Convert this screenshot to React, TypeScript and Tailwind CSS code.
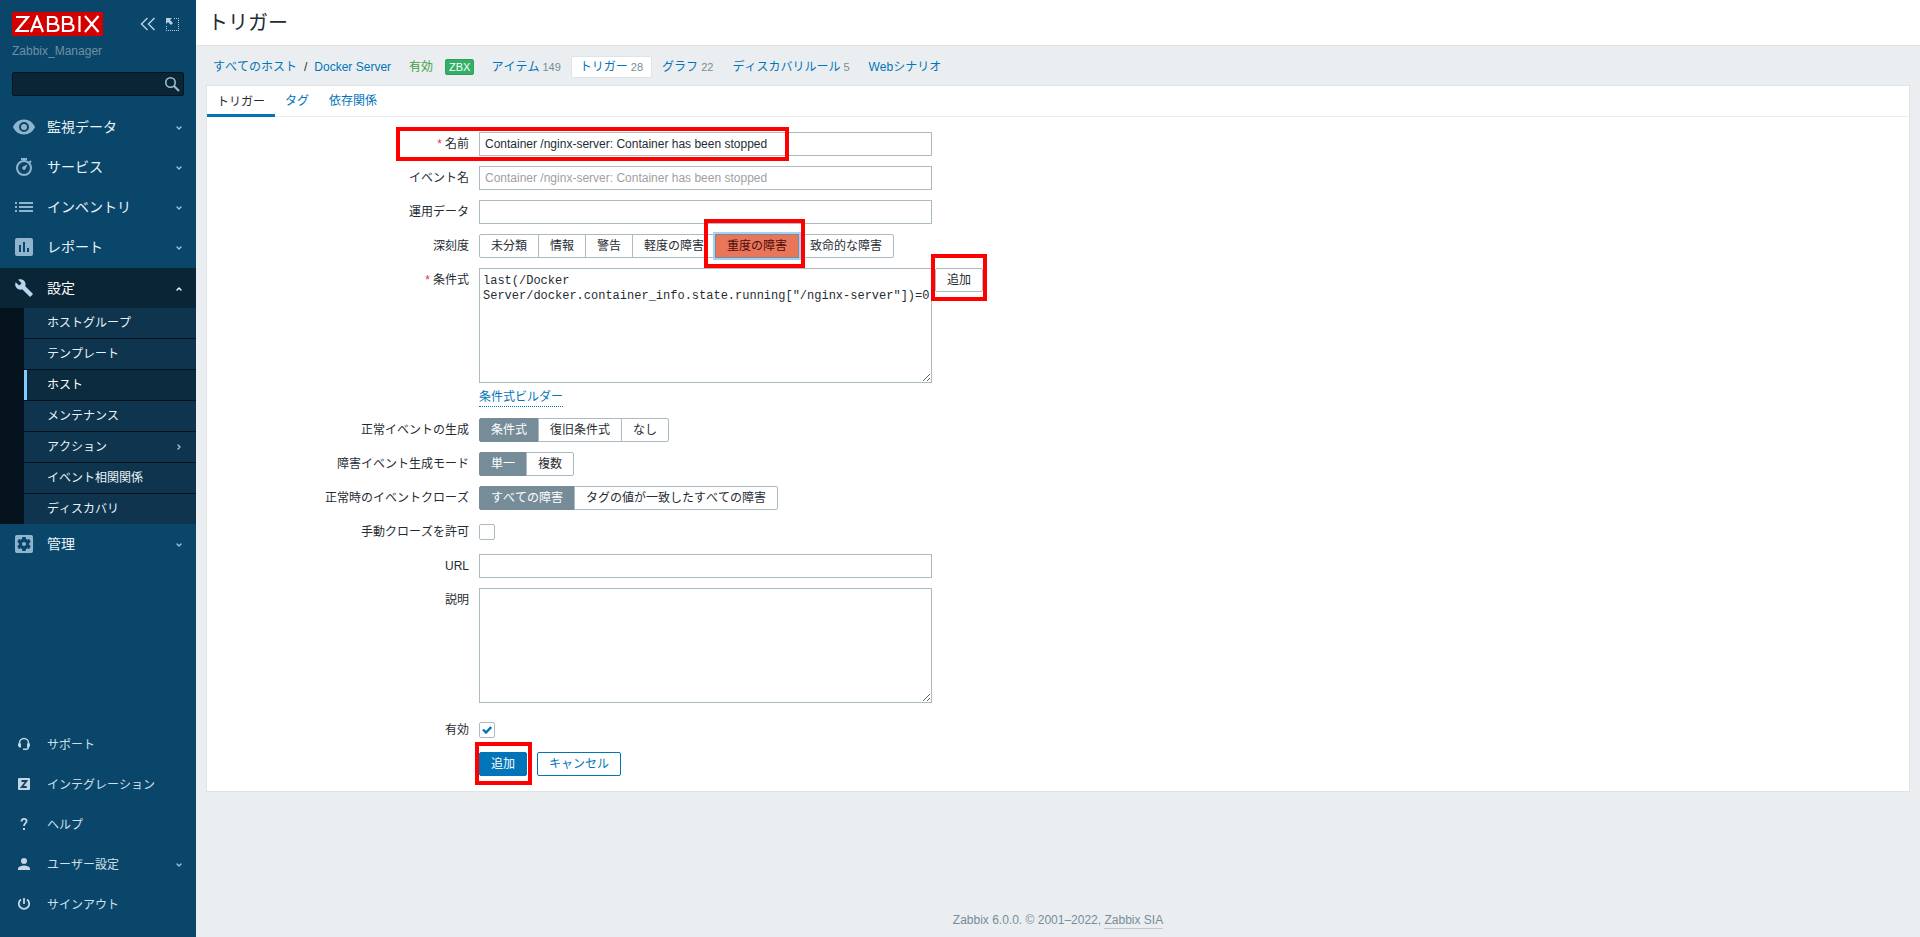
import type { ReactNode } from "react";
import { ChevronDown, ChevronRight, ChevronUp } from "lucide-react";

const mainMenu = [
  { label: "監視データ", icon: "eye" },
  { label: "サービス", icon: "timer" },
  { label: "インベントリ", icon: "list" },
  { label: "レポート", icon: "report" },
];

const configMenu = [
  { label: "ホストグループ" },
  { label: "テンプレート" },
  { label: "ホスト", active: true },
  { label: "メンテナンス" },
  { label: "アクション", more: true },
  { label: "イベント相関関係" },
  { label: "ディスカバリ" },
];

const userMenu = [
  { label: "サポート", icon: "support" },
  { label: "インテグレーション", icon: "integration" },
  { label: "ヘルプ", icon: "help" },
  { label: "ユーザー設定", icon: "user", more: true },
  { label: "サインアウト", icon: "power" },
];

const hostNav = [
  { label: "アイテム", count: 149 },
  { label: "トリガー", count: 28, active: true },
  { label: "グラフ", count: 22 },
  { label: "ディスカバリルール", count: 5 },
  { label: "Webシナリオ" },
];

const fieldClass = "w-full border border-[#acbbc2] bg-white";

function MenuIcon({ name }: { name: string }) {
  if (name === "eye") {
    return (
      <svg width="24" height="24" viewBox="0 0 24 24" fill="currentColor">
        <path d="M12 4.5C7 4.5 2.7 7.6 1 12c1.7 4.4 6 7.5 11 7.5s9.3-3.1 11-7.5c-1.7-4.4-6-7.5-11-7.5zM12 17a5 5 0 1 1 0-10 5 5 0 0 1 0 10zm0-8a3 3 0 1 0 0 6 3 3 0 0 0 0-6z" />
      </svg>
    );
  }
  if (name === "timer") {
    return (
      <svg width="24" height="24" viewBox="0 0 24 24" fill="none" stroke="currentColor" strokeWidth="2">
        <circle cx="12" cy="13" r="7" />
        <path d="M9 4h6M12 4v2M17.5 7.5l1.5-1.5" />
        <path d="M15.5 9.5l-2 4.500a1.800 1.800 0 1 1-2.500-2.500z" fill="currentColor" stroke="none" />
      </svg>
    );
  }
  if (name === "list") {
    return (
      <svg width="24" height="24" viewBox="0 0 24 24" fill="currentColor">
        <path d="M3 7h2v2H3zM7 7h14v2H7zM3 11h2v2H3zM7 11h14v2H7zM3 15h2v2H3zM7 15h14v2H7z" />
      </svg>
    );
  }
  if (name === "report") {
    return (
      <svg width="24" height="24" viewBox="0 0 24 24" fill="currentColor">
        <path d="M19 3H5a2 2 0 0 0-2 2v14a2 2 0 0 0 2 2h14a2 2 0 0 0 2-2V5a2 2 0 0 0-2-2zM9 17H7v-7h2v7zm4 0h-2V7h2v10zm4 0h-2v-4h2v4z" />
      </svg>
    );
  }
  if (name === "wrench") {
    return (
      <svg width="24" height="24" viewBox="-3 -3 30 30" fill="currentColor">
        <path d="M22.7 19l-9.1-9.1c.9-2.3.4-5-1.5-6.900-2-2-5-2.400-7.400-1.300L9 6 6 9 1.600 4.700C.4 7.100.9 10.100 2.900 12.100c1.900 1.900 4.600 2.400 6.900 1.500l9.100 9.100c.4.4 1 .4 1.400 0l2.300-2.300c.5-.4.5-1.100.1-1.400z" />
      </svg>
    );
  }
  if (name === "gear") {
    return (
      <svg width="24" height="24" viewBox="0 0 24 24" fill="currentColor">
        <path d="M12 10a2 2 0 1 0 0 4 2 2 0 0 0 0-4zm7-7H5a2 2 0 0 0-2 2v14a2 2 0 0 0 2 2h14a2 2 0 0 0 2-2V5a2 2 0 0 0-2-2zm-1.800 9c0 .2 0 .5-.1.700l1.500 1.200c.1.100.2.300.1.400l-1.400 2.400c-.1.200-.3.200-.4.200l-1.700-.7c-.4.300-.8.500-1.200.7l-.3 1.800c0 .2-.2.300-.3.300h-2.800c-.2 0-.3-.1-.3-.3l-.3-1.800c-.4-.2-.8-.4-1.200-.7l-1.700.7c-.2.100-.3 0-.4-.2l-1.400-2.400c-.1-.1 0-.3.100-.4l1.500-1.200a5 5 0 0 1 0-1.400l-1.500-1.200c-.1-.1-.2-.3-.1-.4l1.400-2.400c.1-.2.3-.2.400-.2l1.700.7c.4-.3.800-.5 1.200-.7l.3-1.800c0-.2.200-.3.300-.3h2.800c.2 0 .3.100.3.300l.3 1.800c.4.200.8.400 1.200.7l1.700-.7c.2-.1.300 0 .4.200l1.400 2.400c.1.100 0 .3-.1.400l-1.500 1.200.1.700z" />
      </svg>
    );
  }
  if (name === "support") {
    return (
      <svg width="14" height="14" viewBox="0 0 14 14" fill="none" stroke="currentColor" strokeWidth="1.500">
        <path d="M2.500 8V6a4.500 4.500 0 0 1 9 0v3.500c0 2-1.500 3-3.500 3" />
        <path d="M1 6.500h3v4H2.500L1 9zM13 6.500h-3v4h1.500L13 9zM6 11.500h2.500V13H6z" fill="currentColor" stroke="none" />
      </svg>
    );
  }
  if (name === "integration") {
    return (
      <svg width="14" height="14" viewBox="0 0 14 14">
        <rect x="1" y="1" width="12" height="12" rx="1" fill="currentColor" />
        <path d="M4.500 4h5L4.800 10h5" fill="none" stroke="#0a466a" strokeWidth="1.800" />
      </svg>
    );
  }
  if (name === "help") {
    return (
      <svg width="14" height="14" viewBox="0 0 14 14" fill="none" stroke="currentColor" strokeWidth="1.800">
        <path d="M4.500 4.500C4.500 2.500 5.500 1.800 7 1.800s2.600.8 2.600 2.300C9.600 6 7 6.200 7 9" />
        <path d="M6 11h2v2H6z" fill="currentColor" stroke="none" />
      </svg>
    );
  }
  if (name === "user") {
    return (
      <svg width="14" height="14" viewBox="0 0 14 14" fill="currentColor">
        <circle cx="7" cy="4" r="3" />
        <path d="M1 13v-1.500C1 9.500 5 8.500 7 8.500s6 1 6 3V13z" />
      </svg>
    );
  }
  return (
    <svg width="14" height="14" viewBox="0 0 14 14" fill="none" stroke="currentColor" strokeWidth="1.800">
      <path d="M7 1v6M4 2.500a5.200 5.200 0 1 0 6 0" />
    </svg>
  );
}

function Sidebar() {
  return (
    <aside className="flex w-[196px] shrink-0 flex-col bg-[#0a466a] text-[#e8f2f8]">
      <div className="flex items-start justify-between px-3 pt-3">
        <a href="#" aria-label="ZABBIX" className="flex h-6 w-[91px] items-center justify-center bg-[#d40000]">
          <svg width="86" height="18" viewBox="0 0 86 18" fill="none" stroke="#fff" strokeWidth="2.200">
            <path d="M1 2h12L1.500 16H14" />
            <path d="M16 17l6-15 6 15M18 12h8" />
            <path d="M33 2v14h6c6 0 6-7 0-7h-6 5c5 0 5-7 0-7zM48 2v14h6c6 0 6-7 0-7h-6 5c5 0 5-7 0-7z" />
            <path d="M64.500 1v16M70 1l13.500 16M83.500 1L70 17" />
          </svg>
        </a>
        <div className="mr-[5px] flex gap-2.5 pt-[5px] text-[#b5cfdf]">
          <button type="button" aria-label="サイドバーを折りたたむ">
            <svg width="16" height="14" viewBox="0 0 16 14" fill="none" stroke="currentColor" strokeWidth="1.500">
              <path d="M7.500 1l-6 6 6 6M14.500 1l-6 6 6 6" />
            </svg>
          </button>
          <button type="button" aria-label="サイドバーを隠す">
            <svg width="13" height="13" viewBox="0 0 13 13" fill="currentColor">
              <path d="M8 0h1v1H8zM10 0h1v1h-1zM12 0h1v1h-1zM12 2h1v1h-1zM12 4h1v1h-1zM12 6h1v1h-1zM12 8h1v1h-1zM12 10h1v1h-1zM12 12h1v1h-1zM10 12h1v1h-1zM8 12h1v1H8zM6 12h1v1H6zM4 12h1v1H4zM2 12h1v1H2zM0 12h1v1H0zM0 10h1v1H0zM0 8h1v1H0z" />
              <path d="M0 0h6L4 2l3 3-2 2-3-3-2 2z" />
            </svg>
          </button>
        </div>
      </div>
      <div className="px-3 pt-1.5 text-[12px] leading-[18px] text-[#6c91a6]">Zabbix_Manager</div>
      <form className="relative mx-3 mt-3">
        <input
          type="text"
          aria-label="検索"
          className="block h-6 w-full rounded-[2px] border border-[#04131d] bg-[#0a2536] px-1.5 text-white"
        />
        <button type="button" aria-label="検索" className="absolute top-[4px] right-[4px] text-[#9dbdd0]">
          <svg width="16" height="16" viewBox="0 0 16 16" fill="none" stroke="currentColor" strokeWidth="1.600">
            <circle cx="6.500" cy="6.500" r="4.700" />
            <path d="M10 10l5 5" strokeWidth="2" />
          </svg>
        </button>
      </form>
      <nav className="mt-[11px] text-[14px]">
        {mainMenu.map((item) => (
          <a key={item.label} href="#" className="flex h-10 items-center pr-[13px] pl-3">
            <span className="text-[#8fb4cc]">
              <MenuIcon name={item.icon} />
            </span>
            <span className="ml-[11px] flex-1 pt-px">{item.label}</span>
            <ChevronDown className="mt-0.5 size-2 text-[#a3c4d8]" strokeWidth={4} />
          </a>
        ))}
        <a href="#" className="mt-px flex h-10 items-center bg-[#0a2536] pr-[13px] pl-3 text-white">
          <span className="text-[#b5d6ec]">
            <MenuIcon name="wrench" />
          </span>
          <span className="ml-[11px] flex-1">設定</span>
          <ChevronUp className="mt-0.5 size-2" strokeWidth={4} />
        </a>
        <ul className="bg-[#04131d] pl-6 text-[12px]">
          {configMenu.map((item) => (
            <li key={item.label} className="border-b border-[#04131d] last:border-b-0">
              <a
                href="#"
                className={
                  item.active
                    ? "flex h-[30px] items-center border-l-[3px] border-[#80cbff] bg-[#0b2b3e] pr-[13px] pl-5 text-white"
                    : "flex h-[30px] items-center bg-[#0f344d] pr-[13px] pl-[23px]"
                }
              >
                <span className="flex-1">{item.label}</span>
                {item.more && <ChevronRight className="size-2 text-[#a3c4d8]" strokeWidth={4} />}
              </a>
            </li>
          ))}
        </ul>
        <a href="#" className="flex h-10 items-center pr-[13px] pl-3">
          <span className="text-[#8fb4cc]">
            <MenuIcon name="gear" />
          </span>
          <span className="ml-[11px] flex-1">管理</span>
          <ChevronDown className="mt-0.5 size-2 text-[#a3c4d8]" strokeWidth={4} />
        </a>
      </nav>
      <nav className="mt-auto pb-[13px] text-[12px] text-[#d0e0ea]">
        {userMenu.map((item) => (
          <a key={item.label} href="#" className="flex h-10 items-center pr-[13px] pl-[17px]">
            <span className="text-[#c3d6e1]">
              <MenuIcon name={item.icon} />
            </span>
            <span className="ml-4 flex-1 pt-px">{item.label}</span>
            {item.more && <ChevronDown className="mt-0.5 size-2 text-[#a3c4d8]" strokeWidth={4} />}
          </a>
        ))}
      </nav>
    </aside>
  );
}

function Highlight({ className }: { className: string }) {
  return <div className={`pointer-events-none absolute z-10 border-4 border-[#ff0000] ${className}`} />;
}

function Row({
  label,
  htmlFor,
  required,
  children,
}: {
  label?: string;
  htmlFor?: string;
  required?: boolean;
  children: ReactNode;
}) {
  return (
    <div className="relative flex gap-2.5">
      <div className="w-[262px] shrink-0 text-right leading-6">
        {required && <span className="mr-[3px] text-[#e33734]">*</span>}
        {label && <label htmlFor={htmlFor}>{label}</label>}
      </div>
      <div className="relative w-[453px]">{children}</div>
    </div>
  );
}

function Segmented({ name, options, selected }: { name: string; options: string[]; selected: string }) {
  return (
    <div role="radiogroup" aria-label={name} className="flex h-6 w-max">
      {options.map((option) => (
        <label
          key={option}
          className="-ml-px flex items-center border border-[#acbbc2] px-[11px] first:ml-0 first:rounded-l-[2px] last:rounded-r-[2px] has-checked:border-[#768d99] has-checked:bg-[#768d99] has-checked:text-white"
        >
          <input type="radio" name={name} defaultChecked={option === selected} className="sr-only" />
          {option}
        </label>
      ))}
    </div>
  );
}

function SeverityPicker() {
  return (
    <div role="radiogroup" aria-label="深刻度" className="flex h-6 w-max">
      {["未分類", "情報", "警告", "軽度の障害", "重度の障害", "致命的な障害"].map((option) => (
        <label
          key={option}
          className="-ml-px flex items-center border border-[#acbbc2] px-[11px] first:ml-0 first:rounded-l-[2px] last:rounded-r-[2px] has-checked:relative has-checked:border-[#768d99] has-checked:bg-[#e97659] has-checked:text-[#4b0c0c] has-checked:ring-2 has-checked:ring-[#a6d1f2]"
        >
          <input type="radio" name="severity" defaultChecked={option === "重度の障害"} className="sr-only" />
          {option}
        </label>
      ))}
    </div>
  );
}

function Checkbox({ id, checked }: { id: string; checked?: boolean }) {
  return (
    <div className="relative flex h-6 items-center">
      <input
        id={id}
        type="checkbox"
        defaultChecked={checked}
        className="peer size-4 appearance-none rounded-[2px] border border-[#acbbc2] bg-white"
      />
      <svg
        className="pointer-events-none absolute left-[3px] hidden peer-checked:block"
        width="10"
        height="8"
        viewBox="0 0 10 8"
        fill="none"
        stroke="#0275b8"
        strokeWidth="2.400"
      >
        <path d="M1 3.500L4 6.500 9.200 1" />
      </svg>
    </div>
  );
}

function TriggerForm() {
  return (
    <form className="flex flex-col gap-2.5 pt-[15px] pb-[15px]">
      <Row label="名前" htmlFor="name" required>
        <input
          id="name"
          type="text"
          defaultValue="Container /nginx-server: Container has been stopped"
          className={`block h-6 px-[5px] ${fieldClass}`}
        />
        <Highlight className="-top-[5px] -bottom-[5px] -left-[83px] w-[393px]" />
      </Row>
      <Row label="イベント名" htmlFor="event-name">
        <input
          id="event-name"
          type="text"
          placeholder="Container /nginx-server: Container has been stopped"
          className={`block h-6 px-[5px] placeholder:text-[#a0a0a0] ${fieldClass}`}
        />
      </Row>
      <Row label="運用データ" htmlFor="opdata">
        <input id="opdata" type="text" className={`block h-6 px-[5px] ${fieldClass}`} />
      </Row>
      <Row label="深刻度">
        <SeverityPicker />
        <Highlight className="-top-[15px] left-[225px] h-[49px] w-[101px]" />
      </Row>
      <Row label="条件式" htmlFor="expression" required>
        <textarea
          id="expression"
          className={`block h-[115px] resize overflow-hidden px-[3px] pt-[5px] font-['Liberation_Mono',monospace] leading-[15px] whitespace-pre ${fieldClass}`}
          defaultValue={'last(/Docker\nServer/docker.container_info.state.running["/nginx-server"])=0'}
        />
        <div className="absolute top-0 left-full ml-[3px]">
          <button type="button" className="h-6 rounded-[2px] border border-[#acbbc2] px-[11px] whitespace-nowrap">
            追加
          </button>
          <Highlight className="-top-[14px] -left-[4px] h-[47px] w-[56px]" />
        </div>
        <div className="flex h-[25px] items-end pb-px">
          <button type="button" className="border-b border-dotted border-[#0275b8] leading-[18px] text-[#0275b8]">
            条件式ビルダー
          </button>
        </div>
      </Row>
      <Row label="正常イベントの生成">
        <Segmented name="正常イベントの生成" options={["条件式", "復旧条件式", "なし"]} selected="条件式" />
      </Row>
      <Row label="障害イベント生成モード">
        <Segmented name="障害イベント生成モード" options={["単一", "複数"]} selected="単一" />
      </Row>
      <Row label="正常時のイベントクローズ">
        <Segmented
          name="正常時のイベントクローズ"
          options={["すべての障害", "タグの値が一致したすべての障害"]}
          selected="すべての障害"
        />
      </Row>
      <Row label="手動クローズを許可" htmlFor="manual-close">
        <Checkbox id="manual-close" />
      </Row>
      <Row label="URL" htmlFor="url">
        <input id="url" type="text" className={`block h-6 px-[5px] ${fieldClass}`} />
      </Row>
      <Row label="説明" htmlFor="description">
        <textarea id="description" className={`mb-[5px] block h-[115px] resize px-[5px] ${fieldClass}`} />
      </Row>
      <Row label="有効" htmlFor="enabled">
        <Checkbox id="enabled" checked />
      </Row>
      <Row>
        <div className="flex gap-2.5">
          <button type="submit" className="h-6 rounded-[2px] border border-[#0275b8] bg-[#0275b8] px-[11px] text-white">
            追加
          </button>
          <button type="button" className="h-6 rounded-[2px] border border-[#0275b8] px-[11px] text-[#0275b8]">
            キャンセル
          </button>
        </div>
        <Highlight className="-top-[10px] -left-[4px] h-[43px] w-[57px]" />
      </Row>
    </form>
  );
}

export default function App() {
  return (
    <div className="flex min-h-screen bg-[#ebeef0] font-['Liberation_Sans','Noto_Sans_CJK_JP',sans-serif] text-[12px] text-[#1f2c33] [font-kerning:none]">
      <Sidebar />
      <div className="flex min-w-0 flex-1 flex-col">
        <header className="flex h-[46px] items-center border-b border-[#dfe4e7] bg-white px-3">
          <h1 className="text-[20px]">トリガー</h1>
        </header>
        <nav className="flex h-[39px] items-center pt-0.5 pl-[17px] text-[#0275b8]">
          <a href="#">すべてのホスト</a>
          <span className="mx-[7px] text-[#1f2c33]">/</span>
          <a href="#">Docker Server</a>
          <span className="ml-[18px] text-[#429e47]">有効</span>
          <span className="ml-3 rounded-[2px] border border-[#2f9f5e] bg-[#34af67] px-[3px] text-[11px] leading-[14px] text-white">
            ZBX
          </span>
          <div className="ml-2 flex gap-px">
            {hostNav.map((item) => (
              <span
                key={item.label}
                className={
                  item.active
                    ? "flex h-[22px] items-center rounded-[2px] border border-[#dfe4e7] bg-white px-2"
                    : "flex h-[22px] items-center border border-transparent px-2"
                }
              >
                <a href="#">{item.label}</a>
                {item.count && <sup className="static ml-[3px] text-[11px] text-[#768d99]">{item.count}</sup>}
              </span>
            ))}
          </div>
        </nav>
        <main className="mx-2.5 border border-[#dfe4e7] bg-white">
          <div role="tablist" className="flex h-[31px] border-b border-[#ebeef0]">
            <button type="button" role="tab" aria-selected="true" className="-mb-px border-b-[3px] border-[#0275b8] px-2.5 pt-[3px]">
              トリガー
            </button>
            <button type="button" role="tab" className="px-2.5 text-[#0275b8]">
              タグ
            </button>
            <button type="button" role="tab" className="px-2.5 text-[#0275b8]">
              依存関係
            </button>
          </div>
          <TriggerForm />
        </main>
        <footer className="mt-auto pb-2 text-center leading-4 text-[#768d99]">
          Zabbix 6.0.0. © 2001–2022,{" "}
          <a href="#" className="inline-block border-b border-[#c0c9ce]">
            Zabbix SIA
          </a>
        </footer>
      </div>
    </div>
  );
}
